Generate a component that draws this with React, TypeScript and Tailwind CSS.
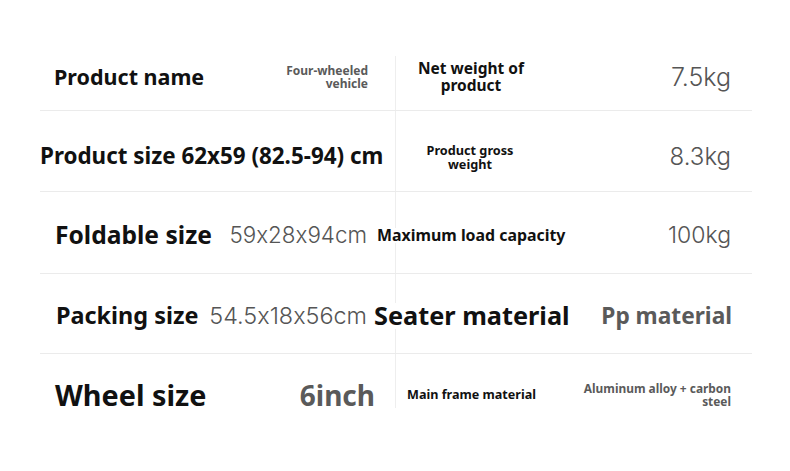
import React from "react";

const label = "font-['Noto_Sans',sans-serif] font-bold text-[#111]";
const thin = "font-['Inter',sans-serif] font-light text-[#555] [font-feature-settings:'calt'_0]";
const grey = "font-['Noto_Sans',sans-serif] font-bold text-[#5a5a5a]";

export default function App() {
  return (
    <div className="w-[790px] h-[471px] bg-white overflow-hidden">
      <div className="ml-[40px] mt-[56px] w-[712px] flex flex-col">
        {/* Row 1 */}
        <div className="h-[55px] flex border-b border-[#ebebeb]">
          <div className="w-[355px] flex items-center pb-3 pl-[14px] pr-[27px]">
            <span className={`${label} text-[21.5px] leading-none`}>Product name</span>
            <span className={`${grey} ml-auto text-[12px] leading-[13px] text-right`}>
              Four-wheeled
              <br />
              vehicle
            </span>
          </div>
          <div className="flex-1 flex items-center pb-3 border-l border-[#eeeeee] pr-[21px]">
            <span className={`${label} ml-[20px] w-[110px] text-center text-[15.5px] leading-[17px]`}>
              Net weight of
              <br />
              product
            </span>
            <span className={`${thin} ml-auto text-[25px] leading-none`}>7.5kg</span>
          </div>
        </div>

        {/* Row 2 */}
        <div className="h-[81px] flex border-b border-[#ebebeb]">
          <div className="w-[355px] flex items-center pt-[11px]">
            <span className={`${label} text-[22.4px] leading-none whitespace-nowrap`}>
              Product size 62x59 (82.5-94) cm
            </span>
          </div>
          <div className="flex-1 flex items-center pt-[11px] border-l border-[#eeeeee] pr-[21px]">
            <span className={`${label} ml-[28px] w-[92px] text-center text-[12.7px] leading-[14px]`}>
              Product gross
              <br />
              weight
            </span>
            <span className={`${thin} ml-auto text-[24px] leading-none`}>8.3kg</span>
          </div>
        </div>

        {/* Row 3 */}
        <div className="h-[82px] flex border-b border-[#ebebeb]">
          <div className="w-[355px] flex items-center pt-[6px] pl-[15px] pr-[28px]">
            <span className={`${label} text-[24.6px] leading-none`}>Foldable size</span>
            <span className={`${thin} ml-auto text-[22.4px] leading-none`}>59x28x94cm</span>
          </div>
          <div className="flex-1 flex items-center pt-[6px] border-l border-[#eeeeee] pr-[21px]">
            <span className={`${label} -ml-[19px] bg-white text-[15.9px] leading-none whitespace-nowrap`}>
              Maximum load capacity
            </span>
            <span className={`${thin} ml-auto text-[23px] leading-none`}>100kg</span>
          </div>
        </div>

        {/* Row 4 */}
        <div className="h-[80px] flex border-b border-[#ebebeb]">
          <div className="w-[355px] flex items-center pt-[5px] pl-[16px] pr-[28px]">
            <span className={`${label} text-[23.4px] leading-none`}>Packing size</span>
            <span className={`${thin} ml-auto text-[23.4px] leading-none`}>54.5x18x56cm</span>
          </div>
          <div className="flex-1 flex items-center pt-[5px] border-l border-[#eeeeee] pr-[20px]">
            <span className={`${label} -ml-[22px] bg-white text-[25.3px] leading-none whitespace-nowrap`}>
              Seater material
            </span>
            <span className={`${grey} ml-auto text-[22.7px] leading-none`}>Pp material</span>
          </div>
        </div>

        {/* Row 5 */}
        <div className="h-[54px] flex">
          <div className="w-[355px] flex items-center pt-[28px] pl-[15px] pr-[20px]">
            <span className={`${label} text-[28.8px] leading-none`}>Wheel size</span>
            <span className={`${grey} ml-auto text-[28px] leading-none`}>6inch</span>
          </div>
          <div className="flex-1 flex items-center pt-[28px] border-l border-[#eeeeee] pr-[21px]">
            <span className={`${label} ml-[11px] text-[12.6px] leading-none whitespace-nowrap`}>
              Main frame material
            </span>
            <span className={`${grey} ml-auto text-[11.9px] leading-[13px] text-right`}>
              Aluminum alloy + carbon
              <br />
              steel
            </span>
          </div>
        </div>
      </div>
    </div>
  );
}
